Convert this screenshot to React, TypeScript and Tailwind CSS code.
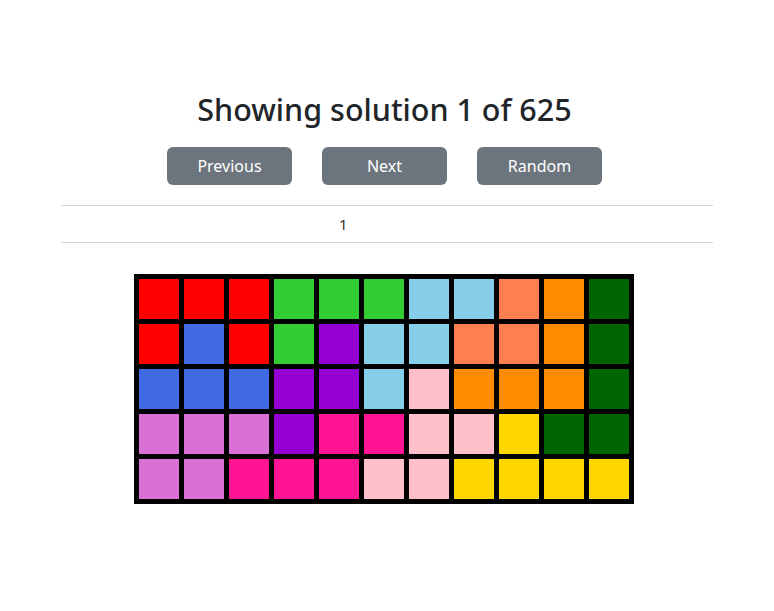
const R = "bg-[#ff0000]";
const G = "bg-[#32cd32]";
const S = "bg-[#87ceeb]";
const C = "bg-[#ff7f50]";
const O = "bg-[#ff8c00]";
const D = "bg-[#006400]";
const B = "bg-[#4169e1]";
const V = "bg-[#9400d3]";
const P = "bg-[#ffc0cb]";
const H = "bg-[#da70d6]";
const K = "bg-[#ff1493]";
const Y = "bg-[#ffd700]";

const board: string[][] = [
  [R, R, R, G, G, G, S, S, C, O, D],
  [R, B, R, G, V, S, S, C, C, O, D],
  [B, B, B, V, V, S, P, O, O, O, D],
  [H, H, H, V, K, K, P, P, Y, D, D],
  [H, H, K, K, K, P, P, Y, Y, Y, Y],
];

export default function App() {
  const buttons = ["Previous", "Next", "Random"];

  return (
    <div className="min-h-[611px] bg-white font-['Noto_Sans',sans-serif] text-[#212529]">
      <div className="px-[61px] pt-[90px]">
        <h2 className="pr-[5px] text-center text-[30.5px] font-medium leading-[38px]">
          Showing solution 1 of 625
        </h2>
        <div className="mt-[19px] flex justify-center gap-[30px] pr-[5px]">
          {buttons.map((label) => (
            <button
              key={label}
              className="h-[38px] w-[125px] rounded-[6px] bg-[#6c757d] text-[16px] text-white"
            >
              {label}
            </button>
          ))}
        </div>
        <div className="mt-[20px] border-y border-[#d3d3d8] py-[8px]">
          <div className="flex h-[20px] items-center pl-[278px] text-[15px] text-[#3d2f24]">
            1
          </div>
        </div>
      </div>
      <div className="mt-[31px] flex justify-center pr-[6px]">
        <div className="grid grid-cols-[repeat(11,40px)] gap-[5px] bg-black p-[5px]">
          {board.flatMap((row, r) =>
            row.map((color, c) => (
              <div key={`${r}-${c}`} className={`h-[40px] w-[40px] ${color}`} />
            ))
          )}
        </div>
      </div>
    </div>
  );
}
